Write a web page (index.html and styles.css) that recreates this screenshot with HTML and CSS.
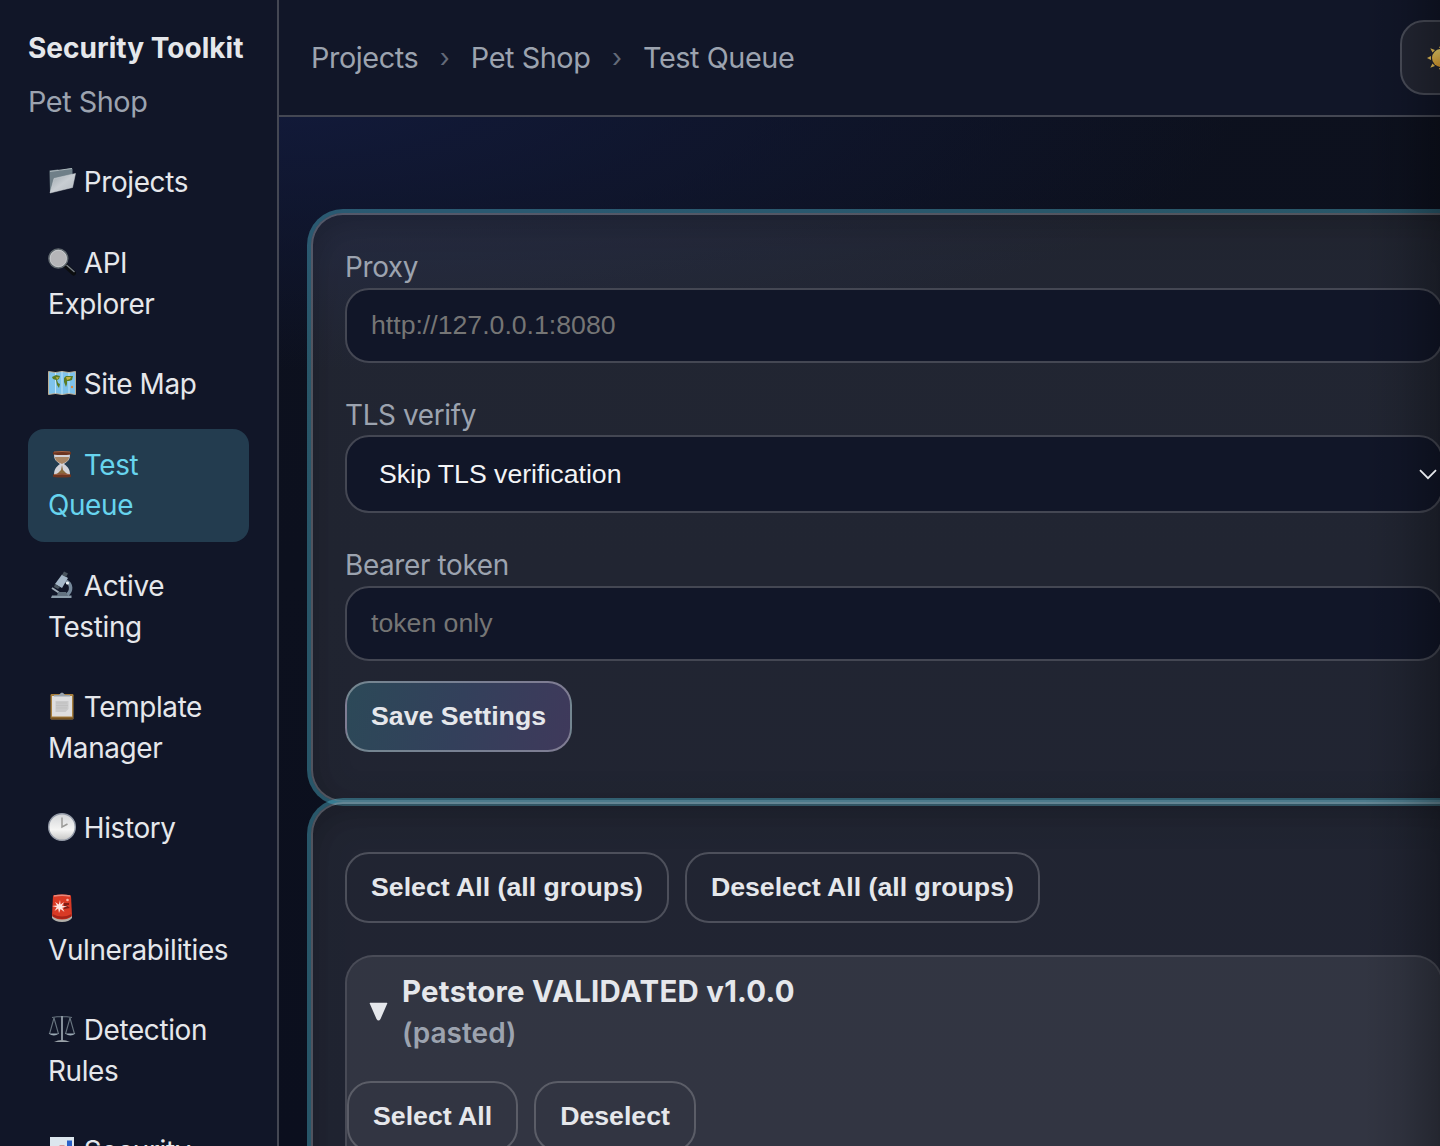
FILE: index.html
```html
<!DOCTYPE html>
<html lang="en">
<head>
<meta charset="utf-8">
<title>Security Toolkit - Test Queue</title>
<link rel="stylesheet" href="styles.css">
</head>
<body>
<div class="app">
  <aside class="sidebar">
    <div class="brand">Security Toolkit</div>
    <div class="project">Pet Shop</div>
    <nav class="nav">
      <a class="nav-item"><svg class="icon" viewBox="0 0 28 28"><defs><linearGradient id="fold" x1="0" y1="0" x2="1" y2="1"><stop offset="0" stop-color="#9aa5ab"/><stop offset=".5" stop-color="#c8cdd2"/><stop offset="1" stop-color="#b4bac0"/></linearGradient></defs><path d="M1.500 3.500 10 2.500l1 1L23.500 1l1 1v15L2 25.500z" fill="#6f7f88"/><path d="M2 4.500 24 1.500" stroke="#aab5ba" fill="none"/><path d="M6 11.500 27.500 6.500 24.500 20.500 2 26z" fill="url(#fold)" stroke="#d3d7da" stroke-width=".5"/></svg> Projects</a>
      <a class="nav-item"><svg class="icon" viewBox="0 0 28 28"><path d="m18 18 7.500 7" stroke="#0b0d0f" stroke-width="5" stroke-linecap="round"/><path d="m18.500 17 8 7" stroke="#7c8388" stroke-width="1.300"/><circle cx="10.300" cy="10.500" r="9.300" fill="#b5b5b8" stroke="#60686e" stroke-width="1.800"/><circle cx="10.300" cy="10.500" r="8.300" fill="none" stroke="#dfe2e4" stroke-width=".6"/></svg> API<br>Explorer</a>
      <a class="nav-item"><svg class="icon" viewBox="0 0 28 28"><path d="m.5 2.500 7 1 6.500-1 7 1 6.500-1v23l-6.500-1-7 1-6.500-1-7 1z" fill="#7fc3ec" stroke="#c9b594" stroke-width=".9"/><path d="M7.500 3.500v21M14 2.500v23M21 3.500v21" stroke="#d4ecfa" stroke-width=".8"/><path d="m4 8 4-2 4 1-1 3-2 1 1 3 2 1-1 4-2-3-1-5-3-1zM16 9l2-2 7 0-1 4-3 1-2 0 0 3-1 3-2-5z" fill="#5c7c25"/><path d="m8 8 3 .5-2 2zM18 8l5 0-1 2-3 1z" fill="#c8b344"/><circle cx="24" cy="18" r="1.200" fill="#dd8a38"/></svg> Site Map</a>
      <a class="nav-item active"><svg class="icon" viewBox="0 0 28 28"><path d="M6 4h16c0 6-2 7-6 10 4 3 6 5 6 11H6c0-6 2-8 6-11C8 11 6 10 6 4z" fill="#d4d4d9"/><path d="M7 7h14c0 4-3 5-7 7-4-2-7-3-7-7z" fill="#a98665"/><path d="m14 15 1 5 4 4H9l4-4z" fill="#8a6a3c"/><path d="M5 2q9-1.500 18 0v2.500q-9 1-18 0zM5 24.500q9-2 18 0V27q-9 1-18 0z" fill="#6b3420"/><path d="M6 2q8-1 16 0M6 24.500q8-1 16 0" stroke="#a56546" fill="none"/></svg> Test<br>Queue</a>
      <a class="nav-item"><svg class="icon" viewBox="0 0 28 28"><path d="M18 10c6 3 6 10 1 14" fill="none" stroke="#75889a" stroke-width="3.500"/><path d="M4 24.500h19.500v2.500H3z" fill="#8b9caa"/><path d="m4 17 9 6" stroke="#9eabb6" stroke-width="2"/><path d="M10 21h8l2 4H9z" fill="#62717f"/><path d="m14 3.500 6 3.500-6 10-7-4z" fill="#a5b7c8"/><path d="m16 .5 4 2-2 3.500-4-2zM7 13l5 3-2 2-4-2z" fill="#48535d"/><circle cx="19.500" cy="12" r="1.600" fill="#eff4f7"/></svg> Active<br>Testing</a>
      <a class="nav-item"><svg class="icon" viewBox="0 0 28 28"><rect x="2.500" y="2" width="23" height="25.500" rx="1.200" fill="#a77f3d"/><path d="M4 4h20v20.500H4z" fill="#dededf"/><path d="M7.500 9h13v8l-3 3h-10z" fill="#c9c9ca"/><path d="M8 11h11M8 13.500h12M8 16h11" stroke="#bbb" stroke-width=".7"/><path d="M6 4.500V3h5q3-5 6 0h5v1.500z" fill="#99a3ad"/><path d="M3 25.500h22v1.500H3z" fill="#755322"/></svg> Template<br>Manager</a>
      <a class="nav-item"><svg class="icon" viewBox="0 0 28 28"><defs><linearGradient id="clock" x1="0" y1="0" x2="0" y2="1"><stop offset="0" stop-color="#d3d5d8"/><stop offset=".6" stop-color="#f5f5f4"/><stop offset="1" stop-color="#c5c5c4"/></linearGradient></defs><circle cx="14" cy="14" r="13.300" fill="url(#clock)" stroke="#949ba8" stroke-width="1.400"/><path d="M14 4.500v9.500l5.500-3" fill="none" stroke="#9a9a98" stroke-width="1.500"/></svg> History</a>
      <a class="nav-item"><svg class="icon" viewBox="0 0 28 28"><path d="M4 20h20v4q-3 4-10 4T4 24z" fill="#b2b0aa"/><path d="M5 1.500q9-2 18 0l1 20q-3 4-10 4T4 21.500z" fill="#d93a25"/><path d="M4.500 20q9.500 5 19 0v2.500q-9.500 5-19 0z" fill="#a72318"/><path d="M6 2q8-1.500 16 0" stroke="#e8897b" fill="none" stroke-width="1.500"/><path d="M16 9h5v2h-3l4 3-6 1" fill="#7f1d16"/><path d="m12 6 .6 4.500L16 8l-2 3.700 5.300.8-5 1.200L16.500 18l-4-3L11 19l-.8-4.500L6.500 17l2.200-3.700L4 12l5-.6-2-3.400 3.800 2.400z" fill="#ffe5df"/><circle cx="19.500" cy="6" r="1.300" fill="#f6b6aa"/></svg><br>Vulnerabilities</a>
      <a class="nav-item"><svg class="icon" viewBox="0 0 28 28" fill="none"><path d="M14 1v24M4 2.500q10-2 20 0M6 3 1.500 19M6 3l4.500 16M22 3l-4.500 16M22 3l4.500 16" stroke="#68747f" stroke-width="1.100"/><path d="M14 1v24" stroke="#99a4ad" stroke-width="1.600"/><path d="M.5 18.500h10.500q-5 4-10.500 0zM17 18.500h10.500q-5 4-10.500 0z" fill="#9caab5"/><path d="M6 27q8-4 16 0z" fill="#9ba3aa"/></svg> Detection<br>Rules</a>
      <a class="nav-item"><svg class="icon" viewBox="0 0 28 28"><path d="M2 1h24v26H2z" fill="#dce6ee"/><path d="M19 4.500h5v20h-5z" fill="#2860c8"/><path d="M4 13h5v12H4z" fill="#4faa58"/><path d="M11.500 9.500h5V25h-5z" fill="#cc4941"/></svg> Security<br>Reports</a>
    </nav>
  </aside>
  <div class="main">
    <header class="topbar">
      <div class="crumbs"><span>Projects</span><span class="sep">›</span><span>Pet Shop</span><span class="sep">›</span><span>Test Queue</span></div>
      <button class="theme" aria-label="Toggle theme"><svg class="sun" viewBox="0 0 28 28"><defs><linearGradient id="sun" x1="0" y1="0" x2="0" y2="1"><stop offset="0" stop-color="#fbe373"/><stop offset="1" stop-color="#eda52d"/></linearGradient></defs><path d="m0 14 4-2v4zM28 14l-4-2v4zM14 0l-2 4h4zM14 28l-2-4h4zM3.300 4.300 8 6 5.500 8.500zM3.300 23.700 5.500 19.500 8 22zM24.700 4.300 20 6l2.500 2.500zM24.700 23.700 20 22l2.500-2.500z" fill="#f6cc5c"/><circle cx="14" cy="14" r="9" fill="url(#sun)"/></svg></button>
    </header>
    <main class="content">
      <section class="card settings">
        <label class="field"><span>Proxy</span><input type="text" placeholder="http://127.0.0.1:8080"></label>
        <label class="field"><span>TLS verify</span><span class="select"><select><option>Skip TLS verification</option></select><svg class="chevron" viewBox="0 0 18 11"><path d="m1 1.200 8 8 8-8" fill="none" stroke="#e5e7eb" stroke-width="1.800"/></svg></span></label>
        <label class="field"><span>Bearer token</span><input type="text" placeholder="token only"></label>
        <button class="btn primary">Save Settings</button>
      </section>
      <section class="card queue">
        <div class="actions"><button class="btn">Select All (all groups)</button><button class="btn">Deselect All (all groups)</button></div>
        <div class="group">
          <div class="group-head">
            <svg class="marker" viewBox="0 0 19 19"><path d="M1.200.8h16.600q.8 0 .5.800L11.500 17q-2 3-4 0L.7 1.600Q.400.8 1.200.8z" fill="#e5e7eb"/></svg>
            <div><div class="group-title">Petstore VALIDATED v1.0.0</div><div class="group-note">(pasted)</div></div>
          </div>
          <div class="actions"><button class="btn">Select All</button><button class="btn">Deselect</button></div>
        </div>
      </section>
    </main>
    <div class="edge-shade"></div>
  </div>
</div>
</body>
</html>
```
FILE: styles.css
```css
* { box-sizing: border-box; }
body {
  margin: 0;
  overflow: hidden;
  background: #0c101d;
  color: #e5e7eb;
  font-family: Inter, "Liberation Sans", sans-serif;
  font-size: 27.9px;
  font-weight: 440;
  letter-spacing: -.36px;
  line-height: 40.6px;
}
.app { display: flex; width: 1440px; height: 1146px; overflow: hidden; }
.sidebar {
  flex: 0 0 279px;
  padding: 28px;
  background: #111628;
  border-right: 2px solid #444753;
  white-space: nowrap;
}
.brand { font-size: 28px; font-weight: 730; letter-spacing: .03px; }
.project { margin-top: 13px; color: #9ca3af; font-size: 28.8px; letter-spacing: -.45px; }
.nav { display: flex; flex-direction: column; gap: 8px; margin-top: 24.3px; }
.nav-item { width: 221px; padding: 16px 20px; border-radius: 16px; }
.nav-item.active { background: #233c4f; color: #67d4ee; }
.icon { width: 28px; height: 28px; margin-right: .3px; vertical-align: -3px; }
.main {
  position: relative;
  flex: 1;
  min-width: 0;
  overflow: hidden;
  background: radial-gradient(ellipse 960px 270px at 0 100px, #121a3a, transparent), linear-gradient(#0d111e, #0b0f1e);
}
.topbar {
  display: flex;
  align-items: center;
  width: 1230px;
  height: 117px;
  padding: 0 32px;
  background: #111628;
  border-bottom: 2px solid #444753;
}
.crumbs { display: flex; gap: 21.3px; flex: 0 0 1089px; padding-top: 2px; color: #9ca3af; font-size: 28.8px; letter-spacing: -.42px; }
.sep { width: 10px; font-size: 26px; opacity: .6; text-align: center; }
.theme {
  display: flex;
  align-items: center;
  flex: 0 0 80px;
  height: 75px;
  padding: 0 25px;
  background: #232633;
  border: 2px solid #4a4d59;
  border-radius: 24px;
}
.sun { flex: 0 0 28px; height: 28px; }
.content { width: 1230px; padding: 96px 32px 0; }
.card {
  width: 1166px;
  padding: 32px;
  border: 2px solid rgba(255,255,255,.22);
  border-radius: 32px;
  background: rgba(255,255,255,.09);
  box-shadow: 0 0 0 4px rgba(75,170,195,.46), inset 0 8px 36px rgba(0,0,0,.24);
}
.settings { height: 589px; }
.queue { height: 700px; padding-top: 48px; }
.field { display: flex; flex-direction: column; color: #9ca3af; }
.field + .field { margin-top: 32px; }
.field input, .select select {
  width: 1098px;
  height: 75px;
  padding: 0 24px;
  border: 2px solid #444753;
  border-radius: 24px;
  background: #111628;
  color: #f3f4f6;
  font: 26.67px "Liberation Sans", sans-serif;
  letter-spacing: 0;
}
.field input::placeholder { color: #757575; opacity: 1; }
.select { display: grid; }
.select select { grid-area: 1 / 1; height: 78px; padding: 0 32px; appearance: none; }
.chevron { grid-area: 1 / 1; place-self: center end; width: 18px; height: 11px; margin-right: 6px; z-index: 1; }
.btn {
  height: 71px;
  padding: 0 24px;
  border: 2px solid rgba(255,255,255,.2);
  border-radius: 24px;
  background: transparent;
  color: #e5e7eb;
  font: bold 26.7px "Liberation Sans", sans-serif;
  letter-spacing: 0;
  white-space: nowrap;
}
.primary {
  display: block;
  margin-top: 20px;
  border-color: rgba(255,255,255,.34);
  background: linear-gradient(105deg, #2c4958, #33405b 50%, #3f395b);
}
.actions { display: flex; gap: 16px; }
.group {
  width: 1098px;
  height: 400px;
  margin-top: 32px;
  border: 2px solid rgba(255,255,255,.18);
  border-radius: 28px;
  background: rgba(255,255,255,.08);
  background-clip: padding-box;
}
.group-head {
  display: flex;
  align-items: center;
  gap: 14px;
  height: 124px;
  padding: 0 22px 13px;
  font-weight: 700;
}
.marker { width: 19px; height: 19px; margin-top: -2px; }
.group-title { font-size: 29.4px; font-weight: 730; letter-spacing: .28px; }
.group-note { color: #9ca3af; font-size: 28px; font-weight: 600; letter-spacing: 0; }
.edge-shade {
  position: absolute;
  top: 0;
  right: 0;
  bottom: 0;
  width: 76px;
  background: linear-gradient(90deg, transparent, rgba(0,0,0,.09) 50%, rgba(0,0,0,.28));
  pointer-events: none;
}
```
